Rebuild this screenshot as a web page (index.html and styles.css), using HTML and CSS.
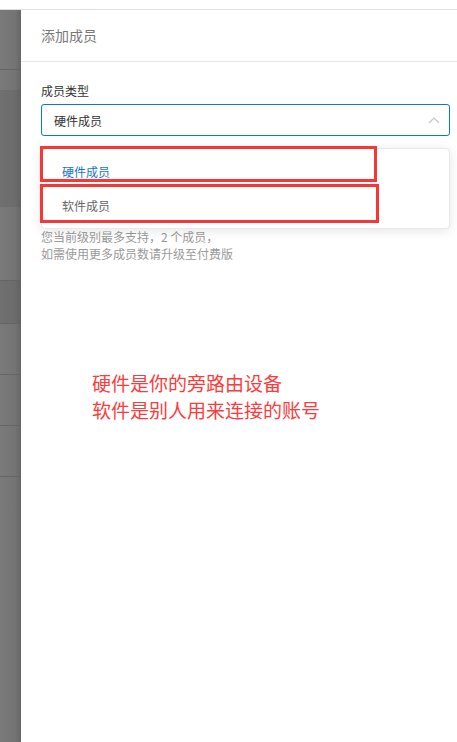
FILE: index.html
```html
<!DOCTYPE html>
<html lang="zh-CN">
<head>
    <meta charset="UTF-8">
    <meta name="viewport" content="width=device-width, initial-scale=1.0">
    <title>添加成员</title>
    <link rel="stylesheet" href="styles.css">
</head>
<body>
    <div class="topbar"></div>
    <div class="main">
        <div class="mask">
            <div class="mask-row r1"></div>
            <div class="mask-row r2"></div>
            <div class="mask-row r3 dark"></div>
            <div class="mask-row r4"></div>
            <div class="mask-row r5 dark"></div>
            <div class="mask-row r6"></div>
            <div class="mask-row r7"></div>
            <div class="mask-row r8"></div>
            <div class="mask-row rest"></div>
        </div>
        <div class="drawer">
            <div class="drawer-header">添加成员</div>
            <div class="drawer-body">
                <div class="form-label">成员类型</div>
                <div class="select">
                    <div class="select-input">
                        <span>硬件成员</span>
                        <svg class="arrow" width="12" height="7" viewBox="0 0 12 7">
                            <path d="M1 6 L6 1 L11 6" fill="none" stroke="#c0c4cc" stroke-width="1.2"/>
                        </svg>
                    </div>
                    <div class="dropdown">
                        <div class="option selected">硬件成员</div>
                        <div class="option">软件成员</div>
                    </div>
                    <div class="mark mark-1"></div>
                    <div class="mark mark-2"></div>
                </div>
                <div class="hint">
                    您当前级别最多支持，2 个成员，<br>
                    如需使用更多成员数请升级至付费版
                </div>
                <div class="note">
                    硬件是你的旁路由设备<br>
                    软件是别人用来连接的账号
                </div>
            </div>
        </div>
    </div>
</body>
</html>
```

FILE: styles.css
```css
body {
    margin: 0;
    font-family: "Noto Sans CJK SC", "Noto Sans", sans-serif;
    background-color: #fff;
    height: 742px;
    overflow: hidden;
}
.topbar {
    height: 9px;
    background-color: #fff;
    border-bottom: 1px solid #dedede;
}
.main {
    display: flex;
    height: 732px;
}
.mask {
    width: 21px;
    display: flex;
    flex-direction: column;
    background: linear-gradient(to right, #7a7a7a, #747474 70%, #666);
}
.mask-row {
    border-bottom: 1px solid #646464;
    box-sizing: border-box;
}
.mask-row.dark {
    background: linear-gradient(to right, #707070, #6c6c6c 70%, #616161);
}
.r1 { height: 60px; }
.r2 { height: 20px; border-bottom: none; }
.r3 { height: 117px; border-bottom: none; }
.r4 { height: 74px; }
.r5 { height: 43px; }
.r6 { height: 51px; }
.r7 { height: 51px; }
.r8 { height: 51px; }
.rest { flex: 1; border-bottom: none; }
.drawer {
    flex: 1;
    background-color: #fff;
}
.drawer-header {
    height: 51px;
    line-height: 51px;
    padding-left: 20px;
    font-size: 14px;
    color: #777;
    border-bottom: 1px solid #e6e6e6;
}
.drawer-body {
    padding: 20px 7px 0 20px;
}
.form-label {
    font-size: 12px;
    line-height: 17px;
    color: #333;
    margin-bottom: 5px;
}
.select {
    position: relative;
}
.select-input {
    height: 32px;
    box-sizing: border-box;
    border: 1px solid #0c78d6;
    border-radius: 3px;
    display: flex;
    align-items: center;
    justify-content: space-between;
    padding: 0 9px 0 12px;
    font-size: 12px;
    color: #333;
}
.arrow {
    display: block;
}
.dropdown {
    position: absolute;
    top: 44px;
    left: 0;
    right: 0;
    background-color: #fff;
    border: 1px solid #e6e8ec;
    border-radius: 4px;
    box-shadow: 0 2px 12px rgba(0, 0, 0, 0.1);
    padding: 6px 0 5px;
}
.option {
    height: 34px;
    line-height: 34px;
    padding-left: 20px;
    font-size: 12px;
    color: #666;
}
.option.selected {
    color: #1a73d0;
}
.mark {
    position: absolute;
    left: -1px;
    border: 3px solid #f93636;
    box-sizing: border-box;
}
.mark-1 {
    top: 42px;
    width: 337px;
    height: 36px;
}
.mark-2 {
    top: 80px;
    width: 339px;
    height: 39px;
}
.hint {
    margin-top: 92px;
    font-size: 12px;
    line-height: 17px;
    color: #999;
}
.note {
    margin: 107px 0 0 51px;
    font-size: 19px;
    line-height: 27px;
    color: #fb3c3c;
}
```
